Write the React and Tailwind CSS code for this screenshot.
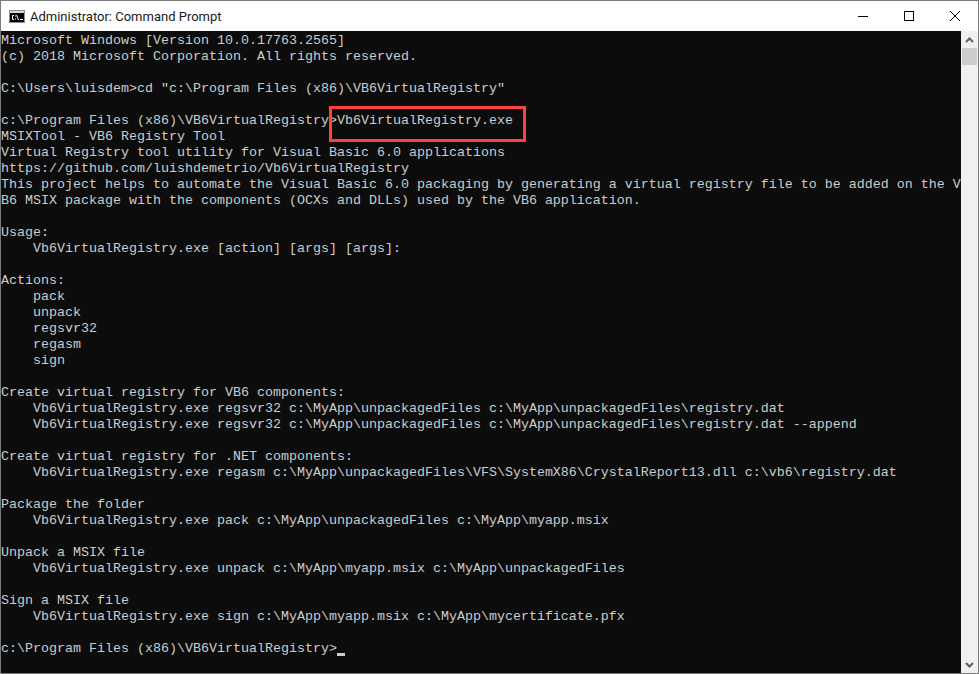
const lines = [
  'Microsoft Windows [Version 10.0.17763.2565]',
  '(c) 2018 Microsoft Corporation. All rights reserved.',
  '',
  'C:\\Users\\luisdem>cd "c:\\Program Files (x86)\\VB6VirtualRegistry"',
  '',
  'c:\\Program Files (x86)\\VB6VirtualRegistry>Vb6VirtualRegistry.exe',
  'MSIXTool - VB6 Registry Tool',
  'Virtual Registry tool utility for Visual Basic 6.0 applications',
  'https://github.com/luishdemetrio/Vb6VirtualRegistry',
  'This project helps to automate the Visual Basic 6.0 packaging by generating a virtual registry file to be added on the V',
  'B6 MSIX package with the components (OCXs and DLLs) used by the VB6 application.',
  '',
  'Usage:',
  '    Vb6VirtualRegistry.exe [action] [args] [args]:',
  '',
  'Actions:',
  '    pack',
  '    unpack',
  '    regsvr32',
  '    regasm',
  '    sign',
  '',
  'Create virtual registry for VB6 components:',
  '    Vb6VirtualRegistry.exe regsvr32 c:\\MyApp\\unpackagedFiles c:\\MyApp\\unpackagedFiles\\registry.dat',
  '    Vb6VirtualRegistry.exe regsvr32 c:\\MyApp\\unpackagedFiles c:\\MyApp\\unpackagedFiles\\registry.dat --append',
  '',
  'Create virtual registry for .NET components:',
  '    Vb6VirtualRegistry.exe regasm c:\\MyApp\\unpackagedFiles\\VFS\\SystemX86\\CrystalReport13.dll c:\\vb6\\registry.dat',
  '',
  'Package the folder',
  '    Vb6VirtualRegistry.exe pack c:\\MyApp\\unpackagedFiles c:\\MyApp\\myapp.msix',
  '',
  'Unpack a MSIX file',
  '    Vb6VirtualRegistry.exe unpack c:\\MyApp\\myapp.msix c:\\MyApp\\unpackagedFiles',
  '',
  'Sign a MSIX file',
  '    Vb6VirtualRegistry.exe sign c:\\MyApp\\myapp.msix c:\\MyApp\\mycertificate.pfx',
  '',
];

export default function App() {
  return (
    <div className="relative w-[979px] h-[674px] flex flex-col overflow-hidden bg-white border border-[#7a7a7a] font-['Liberation_Sans',sans-serif]">
      {/* Title bar */}
      <div className="h-[30px] shrink-0 flex items-center bg-white">
        <svg width="16" height="13" viewBox="0 0 16 13" className="ml-[8px] shrink-0">
          <rect width="16" height="13" fill="#8c8c8c" />
          <rect x="1" y="1" width="14" height="2" fill="#d8d8d8" />
          <rect x="1" y="3" width="14" height="9" fill="#000" />
          <path d="M5 5.5H3.5v4H5M6.5 5.5v1M6.5 8.5v1M7.5 5l2 5M11 9.5h3" stroke="#fff" strokeWidth="1" fill="none" />
        </svg>
        <span className="ml-[5px] text-[13px] text-[#1a1a1a] font-['Roboto',sans-serif] leading-none">
          Administrator: Command Prompt
        </span>
        <div className="ml-auto flex h-full">
          <div className="w-[46px] flex items-center justify-center">
            <svg width="10" height="10" viewBox="0 0 10 10"><path d="M0 5.5h10" stroke="#000" strokeWidth="1" /></svg>
          </div>
          <div className="w-[46px] flex items-center justify-center">
            <svg width="10" height="10" viewBox="0 0 10 10"><rect x="0.5" y="0.5" width="9" height="9" fill="none" stroke="#000" /></svg>
          </div>
          <div className="w-[46px] flex items-center justify-center">
            <svg width="10" height="10" viewBox="0 0 10 10"><path d="M0 0l10 10M10 0L0 10" stroke="#000" strokeWidth="1" /></svg>
          </div>
        </div>
      </div>
      {/* Body */}
      <div className="flex-1 flex min-h-0">
        <div className="flex-1 pt-[2px] bg-[#0c0c0c] text-[#cccccc] font-['Liberation_Mono',monospace] text-[13.33px] leading-[16px] whitespace-pre overflow-hidden">
          {lines.map((l, i) => (
            <div key={i} className="h-[16px]">{l}</div>
          ))}
          <div className="h-[16px] flex">
            <span>{'c:\\Program Files (x86)\\VB6VirtualRegistry>'}</span>
            <span className="w-[8px] h-[3px] mt-[12px] bg-[#cccccc]" />
          </div>
        </div>
        {/* Scrollbar */}
        <div className="w-[17px] shrink-0 bg-[#f0f0f0] flex flex-col items-center">
          <div className="h-[17px] w-full flex items-center justify-center">
            <svg width="9" height="6" viewBox="0 0 9 6"><path d="M1 5l3.5-3.5L8 5" fill="none" stroke="#606060" strokeWidth="2" /></svg>
          </div>
          <div className="w-[15px] h-[17px] bg-[#cdcdcd]" />
          <div className="flex-1" />
          <div className="h-[17px] w-full flex items-center justify-center">
            <svg width="9" height="6" viewBox="0 0 9 6"><path d="M1 1l3.5 3.5L8 1" fill="none" stroke="#606060" strokeWidth="2" /></svg>
          </div>
        </div>
      </div>
      {/* Annotation */}
      <div className="absolute left-[328px] top-[105px] w-[197px] h-[36px] border-[3px] border-[#ff4040]" />
    </div>
  );
}
